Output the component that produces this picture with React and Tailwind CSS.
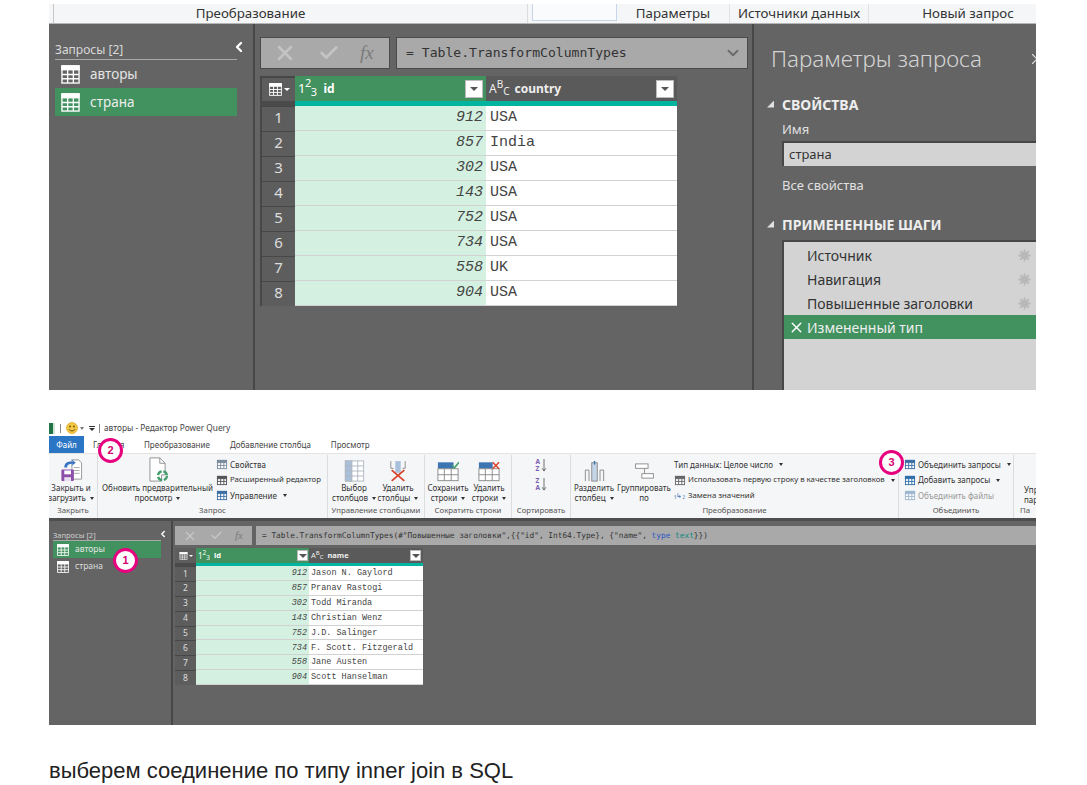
import React from 'react';
import { X, Check, ChevronDown, ChevronLeft } from 'lucide-react';

const ui = { fontFamily: '"Noto Sans", "Open Sans", sans-serif' };
const mono = { fontFamily: '"Liberation Mono", monospace' };

const topRows = [
  ['912', 'USA'], ['857', 'India'], ['302', 'USA'], ['143', 'USA'],
  ['752', 'USA'], ['734', 'USA'], ['558', 'UK'], ['904', 'USA'],
];
const bottomRows = [
  ['912', 'Jason N. Gaylord'], ['857', 'Pranav Rastogi'], ['302', 'Todd Miranda'], ['143', 'Christian Wenz'],
  ['752', 'J.D. Salinger'], ['734', 'F. Scott. Fitzgerald'], ['558', 'Jane Austen'], ['904', 'Scott Hanselman'],
];

// small table glyph used in the query list and grid corner
const TableIcon = ({ className, head = 'white' }) => (
  <svg viewBox="0 0 20 20" className={className} fill="none" stroke="currentColor" strokeWidth="1.4">
    <rect x="1" y="1" width="18" height="18" />
    <rect x="1" y="1" width="18" height="4" fill={head} />
    <path d="M1 10h18M1 14.5h18M7 5v14M13 5v14" />
  </svg>
);

const Gear = () => (
  <svg viewBox="0 0 14 14" className="absolute left-[234px] w-[13px] h-[13px]" fill="#b8b8b8" stroke="#b8b8b8">
    <path d="M7 0.500v13M0.500 7h13M2.400 2.400l9.200 9.200M11.600 2.400l-9.200 9.200" strokeWidth="2" />
    <circle cx="7" cy="7" r="3.500" strokeWidth="1" />
  </svg>
);

const Caret = ({ className = '' }) => (
  <span className={`inline-block w-0 h-0 border-x-[2px] border-x-transparent border-t-[3px] border-t-[#333] align-middle ml-1 ${className}`} />
);

const Badge = ({ n, className }) => (
  <div
    style={{ fontFamily: '"Liberation Sans", sans-serif' }}
    className={`absolute w-[25px] h-[25px] rounded-full bg-white border-[3px] border-[#e6007e] flex items-center justify-center text-[11px] font-bold text-[#d6006f] ${className}`}
  >
    {n}
  </div>
);

const FilterBtn = ({ className }) => (
  <div className={`bg-white border border-[#bbb] flex items-center justify-center ${className}`}>
    <span className="w-0 h-0 border-x-[4px] border-x-transparent border-t-[4px] border-t-[#555]" />
  </div>
);

const TopShot = () => (
  <div className="w-[987px] h-[386px] mt-[4px] flex flex-col overflow-hidden" style={ui}>
    <div className="h-[20px] bg-[#f5f6f7] border-b border-[#b5b5b5] flex text-[13.300px] text-[#333] leading-[18px] whitespace-nowrap">
      <div className="w-[5px] border-r border-[#c8c8c8]" />
      <div className="w-[474px] text-center border-r border-[#dcdcdc] pr-[80px]">Преобразование</div>
      <div className="w-[4px]" />
      <div className="w-[85px] h-[17px] bg-[#f9fbfd] border border-[#c6d6e6] border-t-0" />
      <div className="w-[113px] text-center border-r border-[#e2e2e2]">Параметры</div>
      <div className="w-[139px] text-center border-r border-[#e2e2e2]">Источники данных</div>
      <div className="flex-1 text-center pl-[31px]">Новый запрос</div>
    </div>
    <div className="flex-1 flex bg-[#646464] min-h-0">
      <div className="w-[206px] border-r-2 border-[#474747] px-[6px] pt-[17px]">
        <div className="flex items-start">
          <div className="w-[182px] shrink-0 border-b border-[#a8a8a8] text-[12px] leading-[18px] text-[#d8d8d8]">Запросы [2]</div>
          <ChevronLeft className="w-[16px] h-[16px] shrink-0 text-white ml-[-6px] mt-[-2px]" strokeWidth={3.5} />
        </div>
        <div className="w-[182px]">
          <div className="h-[28px] flex items-center gap-[10px] text-[13.500px] text-[#e4e4e4] pl-[6px]">
            <TableIcon className="w-[19px] h-[19px] text-white" />
            авторы
          </div>
          <div className="h-[28px] flex items-center gap-[10px] text-[13.500px] text-[#eee] pl-[6px] bg-[#41925f]">
            <TableIcon className="w-[19px] h-[19px] text-white" />
            страна
          </div>
        </div>
      </div>
      <div className="w-[499px] border-r-2 border-[#474747] pl-[5px] pt-[13px]">
        <div className="flex gap-[6px] h-[32px]">
          <div className="w-[130px] bg-[#a9a9a9] border border-[#4a4a4a] flex items-center text-[#c4c4c4]">
            <X className="w-[24px] h-[24px] ml-[12px]" strokeWidth={2.5} />
            <Check className="w-[22px] h-[22px] ml-[21px]" strokeWidth={3} />
            <span className="ml-[20px] text-[19px] italic text-[#7b7b7b]" style={{ fontFamily: '"Liberation Serif", serif' }}>fx</span>
          </div>
          <div className="w-[352px] bg-[#a9a9a9] border border-[#4a4a4a] flex items-center pl-[9px] text-[13.100px] text-[#333]" style={{ fontFamily: '"DejaVu Sans Mono", monospace' }}>
            <span className="flex-1">= Table.TransformColumnTypes</span>
            <ChevronDown className="w-[18px] h-[18px] text-[#6a6a6a] mr-[5px]" strokeWidth={2.5} />
          </div>
        </div>
        <div className="mt-[7px] w-[417px]">
          <div className="flex h-[25px]">
            <div className="w-[35px] bg-[#5d5d5d] border-t-[2px] border-l-[2px] border-[#474747] flex items-center justify-center">
              <TableIcon className="w-[15px] h-[13px] text-white" head="white" />
              <span className="w-0 h-0 border-x-[3px] border-x-transparent border-t-[3px] border-t-white ml-[1px]" />
            </div>
            <div className="w-[191px] bg-[#41925f] flex items-center text-white font-bold text-[12px] relative">
              <span className="ml-[3px] text-[13px] font-normal tracking-[-0.5px]">1<sup className="text-[11px]">2</sup><sub className="text-[11px]">3</sub></span>
              <span className="ml-[7px]">id</span>
              <FilterBtn className="absolute right-[3px] top-[4px] w-[18px] h-[18px]" />
            </div>
            <div className="flex-1 bg-[#5a5a5a] flex items-center text-[#eee] font-bold text-[12px] relative">
              <span className="ml-[3px] text-[12px] font-normal">A<sup className="text-[10px]">B</sup><sub className="text-[10px]">C</sub></span>
              <span className="ml-[5px]">country</span>
              <FilterBtn className="absolute right-[3px] top-[4px] w-[18px] h-[18px]" />
            </div>
          </div>
          <div className="flex h-[5px]">
            <div className="w-[35px] bg-[#4a4a4a]" />
            <div className="flex-1 bg-[#00b5a0]" />
          </div>
          {topRows.map(([id, name], i) => (
            <div key={id} className="flex h-[25px]">
              <div className="w-[35px] bg-[#5d5d5d] border-t border-[#474747] border-l-[2px] flex items-center justify-center pb-[3px] text-[15px] text-[#ddd]">{i + 1}</div>
              <div className="w-[191px] bg-[#d4f0e0] border-b border-[#d2d2d2] flex items-center justify-end pt-[1px] pr-[3px] italic text-[15px] text-[#444]" style={mono}>{id}</div>
              <div className="flex-1 bg-white border-b border-[#d2d2d2] flex items-center pt-[1px] pl-[4px] text-[15px] text-[#444]" style={mono}>{name}</div>
            </div>
          ))}
        </div>
      </div>
      <div className="flex-1 min-w-0 overflow-hidden pl-[13px] pt-[17px] text-[#e0e0e0]">
        <div className="flex items-center ml-[4px]">
          <span className="text-[22.400px] leading-[36px] text-[#d4d4d4] font-light whitespace-nowrap">Параметры запроса</span>
          <X className="w-[18px] h-[18px] ml-[46px] shrink-0 text-[#ddd]" strokeWidth={1.5} />
        </div>
        <div className="flex items-center mt-[17px] h-[20px]">
          <span className="w-[7px] h-[7px] bg-[#e0e0e0] [clip-path:polygon(100%_0,100%_100%,0_100%)] mr-[8px]" />
          <span className="text-[14px] font-bold text-[#eee]">СВОЙСТВА</span>
        </div>
        <div className="pl-[15px]">
          <div className="text-[13px] mt-[6px] h-[18px] leading-[18px]">Имя</div>
          <div className="h-[25px] mt-[3px] bg-[#d3d3d3] border-t-2 border-l-2 border-[#474747] flex items-center pl-[5px] text-[13px] text-[#333]">страна</div>
          <div className="text-[13px] mt-[10px] h-[18px] leading-[18px]">Все свойства</div>
        </div>
        <div className="flex items-center mt-[20px] h-[20px] whitespace-nowrap">
          <span className="w-[7px] h-[7px] bg-[#e0e0e0] [clip-path:polygon(100%_0,100%_100%,0_100%)] mr-[8px]" />
          <span className="text-[14px] font-bold text-[#eee]">ПРИМЕНЕННЫЕ ШАГИ</span>
        </div>
        <div className="ml-[15px] mt-[6px] h-[150px] bg-[#d3d3d3] border-t-2 border-l-2 border-[#474747] pt-[1px] text-[14px] text-[#333]">
          {['Источник', 'Навигация', 'Повышенные заголовки'].map((s) => (
            <div key={s} className="h-[24px] flex items-center pl-[23px] whitespace-nowrap relative">
              {s}
              <Gear />
            </div>
          ))}
          <div className="h-[24px] flex items-center bg-[#41925f] text-[#eee] whitespace-nowrap pl-[4px]">
            <X className="w-[17px] h-[17px] text-white mr-[2px]" strokeWidth={2} />
            Измененный тип
          </div>
        </div>
      </div>
    </div>
  </div>
);

const RibbonGroup = ({ label, w, children, last }) => (
  <div className={`flex flex-col shrink-0 ${last ? '' : 'border-r border-[#dcdcdc]'}`} style={{ width: w }}>
    <div className="flex-1 flex items-start min-h-0">{children}</div>
    <div className="h-[13px] text-center text-[7.800px] leading-[11px] text-[#555] whitespace-nowrap">{label}</div>
  </div>
);

const BigBtn = ({ icon, lines, w, caret }) => (
  <div className="flex flex-col items-center text-center shrink-0" style={{ width: w }}>
    <div className="h-[27px] flex items-end justify-center">{icon}</div>
    <div className="text-[8px] leading-[9.500px] text-[#333] whitespace-nowrap mt-[1px]">
      <div>{lines[0]}</div>
      <div>{lines[1]}{caret && <Caret />}</div>
    </div>
  </div>
);

const SmallBtn = ({ icon, children, caret, dim, tight }) => (
  <div className={`h-[15.500px] flex items-center gap-[2px] whitespace-nowrap ${tight ? 'text-[7.800px]' : 'text-[8px]'} ${dim ? 'text-[#999]' : 'text-[#333]'}`}>
    {icon}
    <span>{children}</span>
    {caret && <Caret />}
  </div>
);

const Mini = ({ color = '#5f7f9e' }) => (
  <svg viewBox="0 0 12 12" className="w-[12px] h-[11px]" fill="none" stroke={color} strokeWidth="1">
    <rect x="1" y="1.5" width="10" height="9" fill="#fff" />
    <rect x="1" y="1.5" width="10" height="2.5" fill={color} />
    <path d="M1 7h10M4.5 4v6.5M8 4v6.5" />
  </svg>
);

const Ribbon = () => (
  <div className="h-[65px] bg-[#f5f6f7] border-t border-[#e3e3e3] flex pt-[1px]">
    <RibbonGroup label="Закрыть" w={49}>
      <BigBtn w={44} lines={['Закрыть и', 'загрузить']} caret icon={
        <svg viewBox="0 0 24 26" className="w-[24px] h-[25px]">
          <path d="M13 3h7l3 3v17h-10z" fill="#fff" stroke="#999" />
          <path d="M15 11h6M15 14h6M15 17h6" stroke="#aaa" />
          <rect x="2" y="13" width="13" height="12" rx="1" fill="#8d4fa8" />
          <rect x="5" y="14" width="7" height="4" fill="#fff" />
          <rect x="5" y="21" width="7" height="4" fill="#e9dff0" />
          <path d="M5 11c0-5 4-7 9-6l-2-3 5 4-5 4 2-3c-4 0-6 1-6 4z" fill="#3b74c4" />
        </svg>
      } />
    </RibbonGroup>
    <RibbonGroup label="Запрос" w={230}>
      <BigBtn w={119} lines={['Обновить предварительный', 'просмотр']} caret icon={
        <svg viewBox="0 0 22 28" className="w-[20px] h-[25px]">
          <path d="M2 1h11l6 6v13h-4v7H2z" fill="#fff" stroke="#8a8a8a" />
          <path d="M13 1v6h6" fill="none" stroke="#8a8a8a" />
          <circle cx="16" cy="21" r="5" fill="none" stroke="#3f9e6a" strokeWidth="2.5" strokeDasharray="6 2" />
        </svg>
      } />
      <div className="pt-[2px] ml-[-1px]">
        <SmallBtn icon={<Mini color="#7a8b9c" />}>Свойства</SmallBtn>
        <SmallBtn icon={<Mini color="#555" />} tight>Расширенный редактор</SmallBtn>
        <SmallBtn icon={<Mini color="#3c6ea5" />} caret>Управление</SmallBtn>
      </div>
    </RibbonGroup>
    <RibbonGroup label="Управление столбцами" w={97}>
      <BigBtn w={52} lines={['Выбор', 'столбцов']} caret icon={
        <svg viewBox="0 0 22 24" className="w-[21px] h-[22px]" fill="none" stroke="#aeb6bf">
          <rect x="1" y="1" width="20" height="22" fill="#fff" />
          <rect x="1" y="1" width="7" height="22" fill="#a8c0dc" />
          <path d="M1 6.5h20M1 12h20M1 17.5h20M8 1v22M14.500 1v22" />
        </svg>
      } />
      <BigBtn w={36} lines={['Удалить', 'столбцы']} caret icon={
        <svg viewBox="0 0 20 24" className="w-[18px] h-[22px]" fill="none">
          <path d="M2 1v8h3M18 1v8h-3" stroke="#888" />
          <rect x="7" y="1" width="6" height="13" fill="#a8c0dc" />
          <path d="M3 11l14 12M17 11L3 23" stroke="#d9432b" strokeWidth="2" />
        </svg>
      } />
    </RibbonGroup>
    <RibbonGroup label="Сократить строки" w={87}>
      <BigBtn w={46} lines={['Сохранить', 'строки']} caret icon={
        <svg viewBox="0 0 24 22" className="w-[22px] h-[21px]" fill="none" stroke="#888">
          <rect x="1" y="1" width="17" height="7" fill="#3c74b4" stroke="none" />
          <rect x="1" y="8" width="22" height="13" fill="#fff" />
          <path d="M1 14.500h22M8 8v13M15.500 8v13" />
          <path d="M16 4l3 3 5-6" stroke="#3f9e6a" strokeWidth="1.6" />
        </svg>
      } />
      <BigBtn w={36} lines={['Удалить', 'строки']} caret icon={
        <svg viewBox="0 0 24 22" className="w-[22px] h-[21px]" fill="none" stroke="#888">
          <rect x="1" y="1" width="15" height="7" fill="#3c74b4" stroke="none" />
          <rect x="1" y="8" width="22" height="13" fill="#fff" />
          <path d="M1 14.500h22M8 8v13M15.500 8v13" />
          <path d="M16 1l7 7M23 1l-7 7" stroke="#d9432b" strokeWidth="1.6" />
        </svg>
      } />
    </RibbonGroup>
    <RibbonGroup label="Сортировать" w={59}>
      <div className="w-full flex flex-col items-center pt-[3px] gap-[5px]">
        {['AZ', 'ZA'].map((s) => (
          <div key={s} className="flex items-center">
            <span className="text-[6.500px] leading-[7px] w-[5px] font-bold text-[#7b5fb0]">{s[0]}<br />{s[1]}</span>
            <svg viewBox="0 0 6 14" className="w-[6px] h-[13px]" fill="none" stroke="#666"><path d="M3 0v13M1 10l2 3 2-3" /></svg>
          </div>
        ))}
      </div>
    </RibbonGroup>
    <RibbonGroup label="Преобразование" w={328}>
      <BigBtn w={46} lines={['Разделить', 'столбец']} caret icon={
        <svg viewBox="0 0 22 24" className="w-[21px] h-[22px]" fill="none" stroke="#888">
          <path d="M1 23V11h4v12M17 23V11h4v12" />
          <rect x="8" y="3" width="6" height="20" fill="#c5d5e8" />
          <path d="M11 1v4" stroke="#3c74b4" strokeWidth="1.500" />
        </svg>
      } />
      <BigBtn w={54} lines={['Группировать', 'по']} icon={
        <svg viewBox="0 0 22 18" className="w-[21px] h-[16px] mb-[3px]" fill="#fff" stroke="#888">
          <rect x="1" y="1" width="14" height="5" />
          <rect x="8" y="12" width="13" height="5" />
          <path d="M11 6v6" />
        </svg>
      } />
      <div className="pt-[2px] pl-[3px]">
        <SmallBtn caret>Тип данных: Целое число</SmallBtn>
        <SmallBtn icon={<Mini color="#666" />} caret tight>Использовать первую строку в качестве заголовков</SmallBtn>
        <SmallBtn icon={<span className="text-[7px] w-[12px] text-[#3c74b4]">₁↳₂</span>} tight>Замена значений</SmallBtn>
      </div>
    </RibbonGroup>
    <RibbonGroup label="Объединить" w={115}>
      <div className="pt-[2px] pl-[5px]">
        <SmallBtn icon={<Mini color="#3c6ea5" />} caret>Объединить запросы</SmallBtn>
        <SmallBtn icon={<Mini color="#2d6fa8" />} caret>Добавить запросы</SmallBtn>
        <SmallBtn icon={<Mini color="#9db6cf" />} dim>Объединить файлы</SmallBtn>
      </div>
    </RibbonGroup>
    <RibbonGroup label="Па" w={22} last>
      <div className="w-full text-[8px] leading-[9.500px] text-[#333] pt-[30px] pl-[10px] whitespace-nowrap">Упр<br />пара</div>
    </RibbonGroup>
  </div>
);

const BottomShot = () => (
  <div className="relative w-[987px] h-[305px] mt-[30px] flex flex-col overflow-hidden" style={ui}>
    <div className="h-[16px] flex items-center text-[8.300px] text-[#444] whitespace-nowrap">
      <span className="w-[6px] h-[11px] bg-[#217346] border-r-2 border-[#cfe5d8]" />
      <span className="w-px h-[9px] bg-[#888] ml-[5px]" />
      <svg viewBox="0 0 12 12" className="w-[12px] h-[12px] ml-[5px]">
        <circle cx="6" cy="6" r="5.500" fill="#f5c842" stroke="#d9a520" strokeWidth="0.7" />
        <circle cx="4" cy="4.500" r="0.900" fill="#6b4e10" />
        <circle cx="8" cy="4.500" r="0.900" fill="#6b4e10" />
        <path d="M3 7.200c1 2.300 5 2.300 6 0" fill="none" stroke="#6b4e10" />
      </svg>
      <span className="w-0 h-0 border-x-[2px] border-x-transparent border-t-[3px] border-t-[#777] ml-[2px]" />
      <span className="w-[6px] h-[4px] border-t border-[#333] ml-[5px] flex justify-center"><span className="w-0 h-0 mt-[1px] border-x-[3px] border-x-transparent border-t-[3px] border-t-[#333]" /></span>
      <span className="w-px h-[9px] bg-[#888] ml-[4px]" />
      <span className="ml-[4px]">авторы - Редактор Power Query</span>
    </div>
    <div className="h-[17px] flex items-center text-[8px] text-[#444]">
      <div className="w-[35px] h-[17px] bg-[#2b75c5] text-white flex items-center justify-center">Файл</div>
      <div className="w-[49px] h-[17px] pl-[9px] flex items-center">Главная</div>
      <span className="ml-[11px]">Преобразование</span>
      <span className="ml-[20px]">Добавление столбца</span>
      <span className="ml-[20px]">Просмотр</span>
    </div>
    <Ribbon />
    <div className="flex-1 flex bg-[#646464] border-t-[3px] border-[#4e4e4e] min-h-0">
      <div className="w-[124px] border-r-2 border-[#474747] px-[4px] pt-[10px] shrink-0">
        <div className="flex items-start">
          <div className="w-[108px] shrink-0 border-b border-[#a8a8a8] text-[7.500px] leading-[9px] text-[#cfcfcf]">Запросы [2]</div>
          <ChevronLeft className="w-[10px] h-[10px] shrink-0 text-white ml-[-3px] mt-[-2px]" strokeWidth={3.5} />
        </div>
        <div className="w-[108px] h-[17px] flex items-center gap-[6px] pl-[4px] bg-[#41925f] text-[8.500px] text-[#e4e4e4]">
          <TableIcon className="w-[12px] h-[12px] text-white" />
          авторы
        </div>
        <div className="w-[108px] h-[17px] flex items-center gap-[6px] pl-[4px] text-[8.500px] text-[#ddd]">
          <TableIcon className="w-[12px] h-[12px] text-white" />
          страна
        </div>
      </div>
      <div className="flex-1 min-w-0 pl-[2px] pt-[5px]">
        <div className="flex gap-[4px] h-[19px]">
          <div className="w-[77px] shrink-0 bg-[#a9a9a9] flex items-center text-[#c4c4c4]">
            <X className="w-[14px] h-[14px] ml-[8px]" strokeWidth={2.5} />
            <Check className="w-[13px] h-[13px] ml-[13px]" strokeWidth={3} />
            <span className="ml-[12px] text-[11px] italic text-[#7b7b7b]" style={{ fontFamily: '"Liberation Serif", serif' }}>fx</span>
          </div>
          <div className="flex-1 bg-[#a9a9a9] flex items-center pl-[6px] text-[7.800px] text-[#333] whitespace-nowrap" style={{ fontFamily: '"DejaVu Sans Mono", monospace' }}>
            {'= Table.TransformColumnTypes(#"Повышенные заголовки",{{"id", Int64.Type}, {"name", '}
            <span className="text-[#2b57c5] ml-[4.700px]">type</span>
            <span className="text-[#0f8a80] ml-[4.700px]">text</span>
            {'}})'}
          </div>
        </div>
        <div className="mt-[3px] w-[248px]">
          <div className="flex h-[15px]">
            <div className="w-[21px] bg-[#5d5d5d] flex items-center justify-center">
              <TableIcon className="w-[9px] h-[8px] text-white" />
              <span className="w-0 h-0 border-x-[2px] border-x-transparent border-t-[2px] border-t-white ml-[1px]" />
            </div>
            <div className="w-[113px] bg-[#41925f] flex items-center text-white font-bold text-[7.500px] relative">
              <span className="ml-[2px] text-[8px] font-normal">1<sup className="text-[6.500px]">2</sup><sub className="text-[6.500px]">3</sub></span>
              <span className="ml-[4px]">id</span>
              <FilterBtn className="absolute right-[1px] top-[2px] w-[11px] h-[11px]" />
            </div>
            <div className="flex-1 bg-[#5a5a5a] flex items-center text-[#eee] font-bold text-[7.500px] relative">
              <span className="ml-[2px] text-[7.500px] font-normal">A<sup className="text-[6px]">B</sup><sub className="text-[6px]">C</sub></span>
              <span className="ml-[4px]">name</span>
              <FilterBtn className="absolute right-[2px] top-[2px] w-[11px] h-[11px]" />
            </div>
          </div>
          <div className="flex h-[3px]">
            <div className="w-[21px] bg-[#4a4a4a]" />
            <div className="flex-1 bg-[#00b5a0]" />
          </div>
          {bottomRows.map(([id, name], i) => (
            <div key={id} className="flex h-[14.900px]">
              <div className="w-[21px] bg-[#5d5d5d] border-t border-[#474747] flex items-center justify-center text-[8.500px] text-[#ddd]">{i + 1}</div>
              <div className="w-[113px] bg-[#d4f0e0] border-b border-[#d2d2d2] flex items-center justify-end pt-[1px] pr-[2px] italic text-[8.500px] text-[#444]" style={mono}>{id}</div>
              <div className="flex-1 bg-white border-b border-[#d2d2d2] flex items-center pt-[1px] pl-[2px] text-[8.500px] text-[#444]" style={mono}>{name}</div>
            </div>
          ))}
        </div>
      </div>
    </div>
    <Badge n="1" className="left-[64px] top-[128px]" />
    <Badge n="2" className="left-[49px] top-[18px]" />
    <Badge n="3" className="left-[830px] top-[30px]" />
  </div>
);

export default function App() {
  return (
    <div className="w-[1087px] h-[785px] bg-white pl-[49px] overflow-hidden">
      <TopShot />
      <BottomShot />
      <p className="mt-[33px] text-[22px] leading-[26px] text-[#222]" style={{ fontFamily: '"Liberation Sans", Arial, sans-serif' }}>
        выберем соединение по типу inner join в SQL
      </p>
    </div>
  );
}
